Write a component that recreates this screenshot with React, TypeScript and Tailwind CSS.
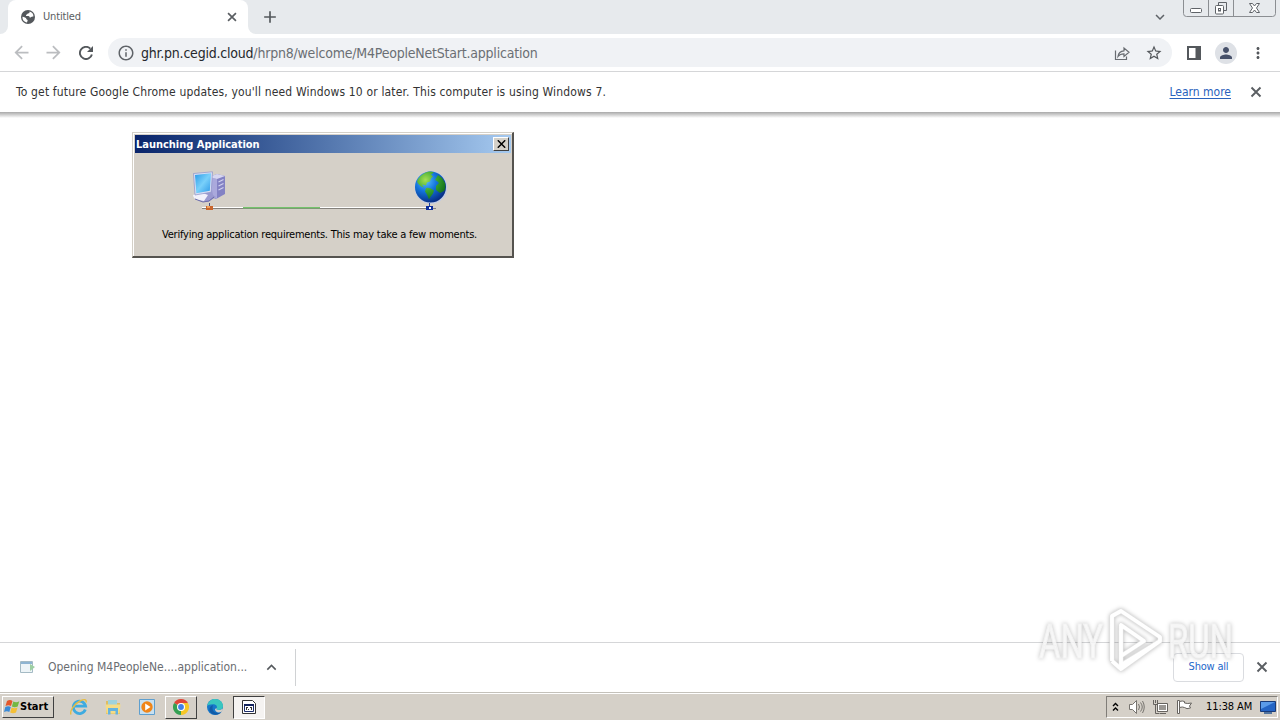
import type { ReactNode } from "react"
import {
  MdAdd,
  MdArrowBack,
  MdArrowForward,
  MdInfoOutline,
  MdKeyboardArrowDown,
  MdKeyboardArrowUp,
  MdMoreVert,
  MdPerson,
  MdStarBorder,
} from "react-icons/md"

function Cross({ className }: { className: string }) {
  return (
    <svg className={className} viewBox="0 0 16 16">
      <path d="M3.500 3.500l9 9M12.500 3.500l-9 9" stroke="#5a5e62" strokeWidth="1.900" />
    </svg>
  )
}

function WindowControls() {
  return (
    <svg className="ml-[14px] h-[18px] w-[95px] shrink-0 self-start" viewBox="0 0 95 18" fill="none">
      <path d="M.5 0v13.5q0 3 3 3h86q3 0 3-3V0" stroke="#8b8e92" />
      <path d="M25.5 0v16M50.5 0v16" stroke="#8b8e92" />
      <rect x="7.5" y="8.500" width="11" height="4" rx="1" stroke="#5f6368" fill="#fff" />
      <path d="M35.500 5V2.500h8v8h-3" stroke="#5f6368" />
      <rect x="32.500" y="5.500" width="8" height="8.500" rx="1" stroke="#5f6368" fill="#fff" />
      <rect x="35.500" y="8.500" width="2" height="2.500" stroke="#5f6368" />
      <path d="M66.500 3.500h3l2 2.500 2-2.500h3l-3 4.500 3 4.500h-3l-2-2.500-2 2.500h-3l3-4.500z" stroke="#5f6368" fill="#fff" />
    </svg>
  )
}

function PageIcon() {
  return (
    <svg className="size-[14px]" viewBox="0 0 14 14">
      <circle cx="7" cy="7" r="7" fill="#54585c" />
      <path
        d="M8.500 1.600c.3 1.300-.3 1.900-1.500 2-.9.100-.8 1.300-1.900 1.300-.5.900.4 1.100 1.300 1.100 1.500 0 2.200.4 2.300 1.500 1.500.1 1.500-1.300 3.700-1C12.700 4.200 11 2.200 8.500 1.600zM1.500 6.700c1.700.4 3.700.6 3.800 2.100 0 .8 1 .7 1.300 1.200.2.700-.3 1.500-.6 2.400C3.300 12.100 1.200 9.800 1.500 6.700z"
        fill="#fff"
      />
    </svg>
  )
}

function TabStrip() {
  return (
    <div className="flex h-[34px] shrink-0 bg-[#e7eaed]">
      <div className="flex w-2 items-end bg-white">
        <div className="h-full w-full rounded-br-lg bg-[#e7eaed]" />
      </div>
      <div className="w-[240px] bg-[#e7eaed]">
        <div className="flex h-full items-center rounded-t-lg bg-white pr-[9px] pl-[13px]">
          <PageIcon />
          <span className="ml-2 pt-px text-[11px] tracking-[-0.15px] text-[#5a5d61]">Untitled</span>
          <Cross className="ml-auto size-[14px]" />
        </div>
      </div>
      <div className="w-2 bg-white">
        <div className="h-full w-full rounded-bl-lg bg-[#e7eaed]" />
      </div>
      <MdAdd className="mt-[7px] ml-[4px] size-5 text-[#54585c]" />
      <MdKeyboardArrowDown className="mt-[8px] ml-auto size-[18px] text-[#5f6368]" />
      <WindowControls />
      <div className="w-[2px]" />
    </div>
  )
}

function Toolbar() {
  return (
    <div className="flex h-[38px] shrink-0 items-center border-b border-[#d5d6d8] bg-white pl-[11px]">
      <MdArrowBack className="size-[21px] text-[#bbbdc0]" />
      <MdArrowForward className="ml-[11px] size-[21px] text-[#bbbdc0]" />
      <svg className="ml-[15px] size-[14px]" viewBox="0 0 14 14">
        <path d="M12.900 8.500A6.100 6.100 0 1 1 11.300 2.600" fill="none" stroke="#54585c" strokeWidth="1.900" />
        <path d="M14 0v6H8z" fill="#54585c" />
      </svg>
      <div className="ml-[15px] flex h-[29px] w-[1064px] items-center rounded-full bg-[#f0f2f5] pr-[9px] pl-[9px]">
        <MdInfoOutline className="size-[18px] text-[#5f6368]" />
        <span className="ml-[6px] pt-px text-[14px] tracking-[-0.21px] whitespace-nowrap text-[#6b6f74]">
          <span className="text-[#25282c]">ghr.pn.cegid.cloud</span>
          /hrpn8/welcome/M4PeopleNetStart.application
        </span>
        <svg className="ml-auto size-4" viewBox="0 0 16 16" fill="none" stroke="#686c71" strokeWidth="1.200">
          <path d="M1.500 5.500v9h11v-3" />
          <path d="M4 11.500c.5-4 2.500-5.500 6-5.700V3l5 4.300-5 4.200V8.800c-3 0-4.600.8-6 2.700z" />
        </svg>
        <MdStarBorder className="ml-[15px] size-[18px] text-[#54585c]" />
      </div>
      <svg className="ml-[15px] h-[14px] w-[14px]" viewBox="0 0 14 14">
        <path d="M0 0h14v14H0zM2 2v10h6.500V2z" fill="#54585c" fillRule="evenodd" />
      </svg>
      <div className="ml-[14px] flex size-[22px] items-center justify-center rounded-full bg-[#dee1e6]">
        <MdPerson className="size-[18px] text-[#47516a]" />
      </div>
      <MdMoreVert className="ml-3 size-[18px] text-[#54585c]" />
    </div>
  )
}

function InfoBar() {
  return (
    <>
      <div className="flex h-10 shrink-0 items-center bg-white pr-4 pl-4 text-[12px] text-[#333]">
        <span className="tracking-[0.16px] whitespace-nowrap">
          To get future Google Chrome updates, you'll need Windows 10 or later. This computer is using Windows 7.
        </span>
        <a className="ml-auto whitespace-nowrap text-[#2a62bd] underline underline-offset-2">Learn more</a>
        <Cross className="ml-[17px] size-4" />
      </div>
      <div className="h-[6px] shrink-0 bg-linear-to-b from-[#a9a9a9] to-white" />
    </>
  )
}

function ComputerIcon() {
  return (
    <svg className="h-8 w-[34px]" viewBox="0 0 34 32">
      <defs>
        <linearGradient id="screen" x1="0" y1="0" x2="1" y2="1">
          <stop offset="0" stopColor="#2a9be8" />
          <stop offset=".5" stopColor="#79d0fa" />
          <stop offset="1" stopColor="#2c98e6" />
        </linearGradient>
      </defs>
      <path d="M17 6l8-3 8 2v18l-9 5-7-3z" fill="#8382c4" />
      <path d="M17 6l8 2v20l-8-3z" fill="#aaa9dc" />
      <path d="M17 6l8-3 8 2-8 3z" fill="#d7d7f1" />
      <path d="M26.500 11l5-2.500M26.500 15l5-2.500M26.500 19l5-2.500" stroke="#d0d0f0" strokeWidth="1.200" />
      <path d="M13 20l7-1 1 5 3 2-8 5-9-1-4-3 1-4z" fill="#9a99d0" />
      <path d="M1 24l7-3 8 3-4 6-7-1q-4-2-4-5z" fill="#f2f1fb" />
      <path d="M1.500 2.500L20.500.8l-1.300 20.400L3 24z" fill="#d9def5" stroke="#8c92c6" strokeWidth=".7" />
      <path d="M3 4l16-1.700-1.200 17.500L4.300 22.300z" fill="url(#screen)" />
      <path d="M3 28l8 3 6-1 5-4" stroke="#6b6ca9" fill="none" />
    </svg>
  )
}

function EarthIcon() {
  return (
    <svg className="size-[34px]" viewBox="0 0 34 34">
      <defs>
        <radialGradient id="ocean" cx=".35" cy=".3" r=".75">
          <stop offset="0" stopColor="#5cc0fb" />
          <stop offset=".45" stopColor="#1475dd" />
          <stop offset="1" stopColor="#06297f" />
        </radialGradient>
        <radialGradient id="land" cx=".3" cy=".3" r=".8">
          <stop offset="0" stopColor="#a5df55" />
          <stop offset=".5" stopColor="#38a52f" />
          <stop offset="1" stopColor="#0e6a1b" />
        </radialGradient>
      </defs>
      <circle cx="17" cy="17.500" r="16.300" fill="#bfcbe6" />
      <circle cx="16.500" cy="17" r="15.500" fill="url(#ocean)" />
      <path
        d="M4 9q4-6 11-7.500 3-.3 5 1l-3 2 2 2-2 2-1 3-3 1-1 3-4-1 2 3-3-1-3-3-1-2zM12 18q4-1 8 2.500l-1 3-3 4-1 2-2-5-2-3zM24 5l4 3 3 5q1 5-1 8l-4 2-4-3v-4l3-3-2-2-2-1z"
        fill="url(#land)"
      />
    </svg>
  )
}

function LaunchDialog() {
  return (
    <div className="absolute top-[132px] left-[132px] h-[126px] w-[382px] border-t border-r-2 border-b-2 border-l border-t-[#d4d0c8] border-r-[#55534f] border-b-[#55534f] border-l-[#d4d0c8] bg-[#d5d0c8]">
      <div className="flex h-full flex-col border-t border-l border-white pt-px pr-px pl-px">
        <div className="flex h-[18px] items-center bg-linear-to-r from-[#0a246a] to-[#a6caf0] pr-[2px] pl-px">
          <span className="pt-[2px] text-[11px] leading-[14px] font-bold tracking-[-0.02px] whitespace-nowrap text-white">
            Launching Application
          </span>
          <div className="ml-auto flex h-[14px] w-4 items-center justify-center border border-t-white border-r-[#404040] border-b-[#404040] border-l-white bg-[#d4d0c8]">
            <svg className="h-[8px] w-[9px]" viewBox="0 0 9 8">
              <path d="M.8.3l7.400 7.400M8.200.3L.8 7.700" stroke="#000" strokeWidth="1.500" />
            </svg>
          </div>
        </div>
        <div className="flex justify-between pt-[17px] pr-[63px] pl-[57px]">
          <div className="pt-px">
            <ComputerIcon />
          </div>
          <EarthIcon />
        </div>
        {/* Network cable between the two machines */}
        <svg className="mt-[-1px] ml-[65px] h-[8px] w-[240px] shrink-0" viewBox="0 0 240 8">
          <path d="M2 5h234v1H2z" fill="#84817c" />
          <path d="M2 4h228v1H2z" fill="#fff" />
          <path d="M43 4h77v1H43z" fill="#74c26b" />
          <path d="M43 5h77v1H43z" fill="#7c9a74" />
          <path d="M9.500 0v3" stroke="#4a5078" />
          <path d="M6 3h7v4H6z" fill="#c9652b" />
          <path d="M7 3h3v2H7z" fill="#f0a25f" />
          <path d="M229.500 0v3" stroke="#1d3f9f" />
          <path d="M226 3h7v4h-7z" fill="#0b2c9c" />
          <path d="M229 4h2v2h-2z" fill="#fff" />
        </svg>
        <span className="mt-[17px] ml-[27px] text-[11px] leading-[14px] tracking-[-0.22px] whitespace-nowrap text-black">
          Verifying application requirements. This may take a few moments.
        </span>
      </div>
    </div>
  )
}

function DownloadShelf() {
  return (
    <div className="flex h-[50px] shrink-0 items-center border-t border-[#d5d6d8] bg-white pr-[10px] pb-px pl-5">
      <svg className="h-4 w-4" viewBox="0 0 16 16">
        <path d="M.5 2.500h12v11H.5z" fill="#edf4f7" stroke="#a4bac4" />
        <path d="M1 3h11v2H1z" fill="#8eb4d2" />
        <path d="M10 5l5 3-5 4z" fill="#9dcfa2" />
      </svg>
      <span className="ml-3 text-[12px] whitespace-nowrap text-[#6a6d71]">Opening M4PeopleNe....application...</span>
      <MdKeyboardArrowUp className="ml-[15px] size-[19px] text-[#54585c]" />
      <div className="ml-[14px] h-[37px] w-px bg-[#d0d2d4]" />
      <div className="ml-auto flex h-[29px] w-[71px] items-center justify-center rounded border border-[#dadce0] text-[11px] tracking-[-0.2px] whitespace-nowrap text-[#2468ca]">
        Show all
      </div>
      <Cross className="ml-[10px] size-4" />
    </div>
  )
}

function TaskButton({ children }: { children: ReactNode }) {
  return <div className="flex h-[23px] w-[32px] items-center justify-center">{children}</div>
}

function Taskbar() {
  return (
    <div className="flex h-[28px] shrink-0 items-center border-t border-[#c4c1ba] bg-[#d5d0c8] shadow-[inset_0_1px_0_#fff]">
      <div className="mt-px ml-[2px] flex h-[22px] w-[52px] items-center border border-t-white border-r-[#404040] border-b-[#404040] border-l-white pl-px">
        <svg className="size-4 shrink-0" viewBox="0 0 16 16">
          <path d="M3 2q3-2 5.500 0L7 7Q4.500 5.500 1.500 7z" fill="#e4572b" />
          <path d="M9.300 2.500q3 1.500 6-.2L13.700 7.500q-3 1.600-5.800 0z" fill="#74b843" />
          <path d="M1.300 8q3-1.700 5.500 0L5.300 13Q3 11.500 0 13z" fill="#3b8ad6" />
          <path d="M7.600 8.400q3 1.500 5.900 0L12 13.500q-3 1.600-5.800 0z" fill="#f5bf35" />
        </svg>
        <span className="text-[11px] font-bold text-black">Start</span>
      </div>
      <div className="mt-px ml-[9px] flex">
        <TaskButton>
          <svg className="size-[18px]" viewBox="0 0 18 18" fill="none">
            <path d="M15.300 11.500a6.200 6.200 0 1 1 .3-3.300H5" stroke="#3eabe0" strokeWidth="2.800" />
            <path d="M1 16.500C-.5 13 4 6 10 3c4-2 7-2 6 1.500" stroke="#e5bc45" strokeWidth="1.400" />
          </svg>
        </TaskButton>
        <div className="ml-[2px]">
          <TaskButton>
            <svg className="size-[18px]" viewBox="0 0 18 18">
              <path d="M2 3h5l1 2h8v11H2z" fill="#dfbd62" />
              <path d="M4 2h9v6H4z" fill="#9fd2dc" />
              <path d="M1.500 6.500h15l-1 9h-13z" fill="#f5dc86" />
              <path d="M4 10h10v6.500h-2.500V13h-5v3.500H4z" fill="#65b3df" />
            </svg>
          </TaskButton>
        </div>
        <div className="ml-[2px]">
          <TaskButton>
            <svg className="size-4" viewBox="0 0 16 16">
              <path d="M.5.5h15v15H.5z" fill="#c8e0f0" stroke="#5e9fcf" />
              <circle cx="8" cy="8" r="5.700" fill="#f08518" />
              <path d="M6.200 4.500v7L11.500 8z" fill="#fff" />
            </svg>
          </TaskButton>
        </div>
        <div className="ml-[2px] border border-t-white border-r-[#404040] border-b-[#404040] border-l-white">
          <div className="flex h-[21px] w-[30px] items-center justify-center">
            <svg className="size-4" viewBox="0 0 16 16">
              <path d="M8 8L1.070 4a8 8 0 0 1 13.860 0z" fill="#df4638" />
              <path d="M8 8l6.930-4A8 8 0 0 1 8 16z" fill="#f6c726" />
              <path d="M8 8v8A8 8 0 0 1 1.070 4z" fill="#35a053" />
              <path d="M8 4h6.930L11.460 10 8 16V8z" fill="#f6c726" />
              <circle cx="8" cy="8" r="4" fill="#fff" />
              <circle cx="8" cy="8" r="2.900" fill="#4180e8" />
            </svg>
          </div>
        </div>
        <div className="ml-[2px]">
          <TaskButton>
            <svg className="size-4" viewBox="0 0 16 16">
              <circle cx="8" cy="8" r="8" fill="#1778ca" />
              <path d="M.3 7C1 2.500 4.500 0 8 0c5 0 8 3.500 8 7 0 2.500-2 4-4.500 4C9 11 9 10 9.800 9c.7-2-1-3.700-3.800-3.700C3 5.300 1 6 .3 7z" fill="#39c6bf" />
              <path d="M5.500 9c0 4 4 6 9 4.300C11 17 5 16 3 13c-1.500-3 0-6 3-7-.4 1-.5 2-.5 3z" fill="#125ca8" />
              <path d="M9.800 9c-.8 1-.6 2 1.700 2 1.600 0 3-.5 3.800-1.500L16 11l-2 2c-3 1-6 0-6-3z" fill="#d5d0c8" />
            </svg>
          </TaskButton>
        </div>
        <div className="ml-[2px] border border-t-[#404040] border-r-white border-b-white border-l-[#404040] bg-[#f5f3f1]">
          <div className="flex h-[21px] w-[30px] items-center justify-center">
            <svg className="h-4 w-[14px]" viewBox="0 0 14 16">
              <path d="M.5 1.500h10l3 3v10H.5z" fill="#fff" stroke="#333" />
              <path d="M2.500 5.500h9v7h-9z" fill="#fff" stroke="#1b2c69" />
              <path d="M2 5h10v2H2z" fill="#14245d" />
              <path d="M4 8h2v1H5v2H4zM8 8h2v3H9V9H8zM6 10h1v1H6z" fill="#333" />
            </svg>
          </div>
        </div>
      </div>
      <div className="mt-px mr-[2px] ml-auto flex h-[22px] w-[172px] items-center border border-t-[#807d78] border-r-white border-b-white border-l-[#807d78] pl-[5px]">
        <svg className="h-[10px] w-[7px]" viewBox="0 0 7 10" fill="none" stroke="#000" strokeWidth="1.400">
          <path d="M1 4l2.500-2.500L6 4M1 8.500L3.500 6 6 8.500" />
        </svg>
        <svg className="ml-[9px] h-4 w-[17px]" viewBox="0 0 17 16" fill="none" stroke="#77746f">
          <path d="M1.500 5.500h3l4-4v13l-4-4h-3z" fill="#fff" />
          <path d="M10.500 5q2 3 0 6M12.500 3.500q3.500 4.500 0 9M14.500 2q3.500 6 0 12" />
        </svg>
        <svg className="ml-[7px] h-4 w-[17px]" viewBox="0 0 17 16" fill="none" stroke="#66635f">
          <path d="M5.500 4.500h10v8h-10z" fill="#fff" />
          <path d="M7 6h7v5H7z" fill="#9a9793" stroke="none" />
          <path d="M8 14.500h6M1.500 1v4.500h4V1M3.500 1v3M3.500 6v8.500h4" />
        </svg>
        <svg className="ml-[7px] h-4 w-[17px]" viewBox="0 0 17 16" fill="#fff" stroke="#66635f">
          <path d="M1.500 1.500h2v13h-2z" />
          <path d="M3.500 2.500q3-1 5 0v1.500q3 1 7 0l-2 3 1 2q-4 1.500-6-.5-2-1-5 0z" />
        </svg>
        <span className="ml-[13px] text-[11px] tracking-[-0.1px] whitespace-nowrap text-black">11:38 AM</span>
        <svg className="mr-px ml-auto h-[14px] w-4 shrink-0" viewBox="0 0 16 14">
          <path d="M.5 1.500h15v10H.5z" fill="#2565c4" stroke="#193b78" />
          <path d="M1 2h14L1 9z" fill="#5b9be8" />
          <path d="M4 12h8v2H4z" fill="#52749e" />
        </svg>
      </div>
    </div>
  )
}

function Watermark() {
  return (
    <svg
      className="pointer-events-none absolute top-[604px] left-[1034px] h-[72px] w-[206px] overflow-visible font-['Roboto',sans-serif] drop-shadow-[0_0_2px_rgba(0,0,0,0.28)]"
      viewBox="0 0 206 72"
    >
      <g fill="#fff" fillOpacity=".8" stroke="#f2f2f2" strokeWidth="1.200">
        <text x="5" y="54" fontSize="48" textLength="64" lengthAdjust="spacingAndGlyphs">
          ANY
        </text>
        <text x="134" y="54" fontSize="48" textLength="65" lengthAdjust="spacingAndGlyphs">
          RUN
        </text>
      </g>
      <g fill="none" strokeLinejoin="round">
        <path d="M78 57V12l9-5 39 26v4L87 61v-9l23-15-23-16v31M78 57l9 8 39-28" stroke="#e2e2e2" strokeWidth="5" />
        <path d="M78 57V12l9-5 39 26v4L87 61v-9l23-15-23-16v31M78 57l9 8 39-28" stroke="#fff" strokeWidth="3.800" />
      </g>
    </svg>
  )
}

export default function App() {
  return (
    <div className="relative flex h-[720px] w-[1280px] flex-col overflow-hidden bg-white font-['DejaVu_Sans_Condensed','DejaVu_Sans',sans-serif]">
      <TabStrip />
      <Toolbar />
      <InfoBar />
      <main className="flex-1 bg-white" />
      <DownloadShelf />
      <Taskbar />
      <LaunchDialog />
      <Watermark />
    </div>
  )
}
